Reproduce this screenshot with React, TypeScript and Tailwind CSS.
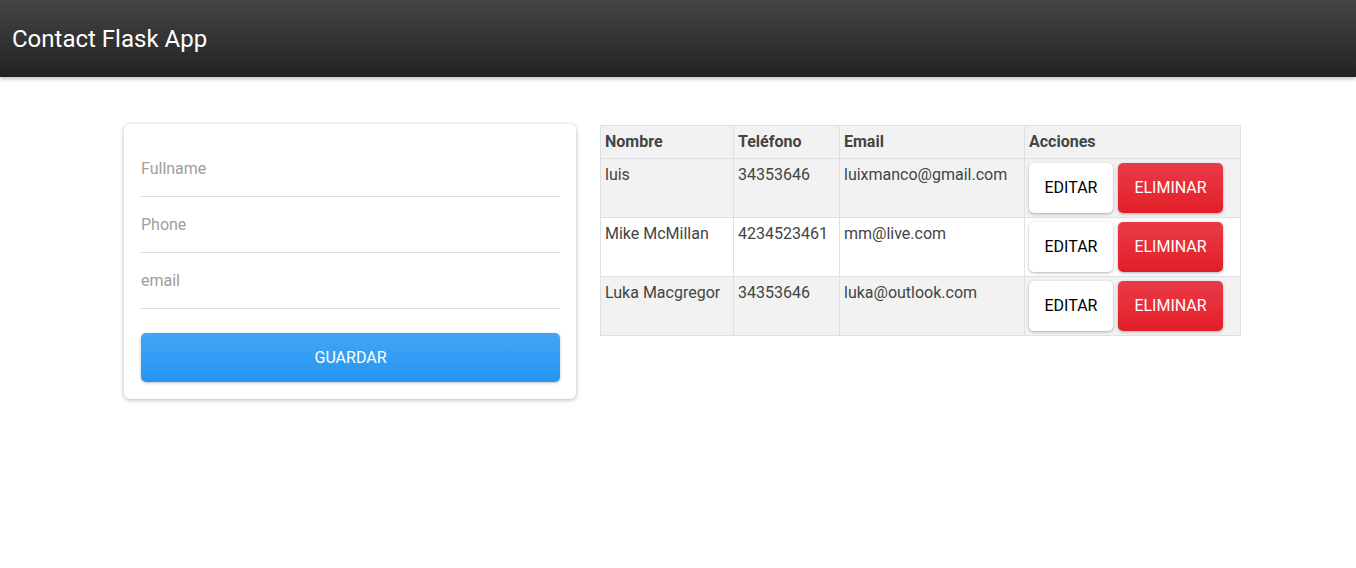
const contacts = [
  { name: "luis", phone: "34353646", email: "luixmanco@gmail.com" },
  { name: "Mike McMillan", phone: "4234523461", email: "mm@live.com" },
  { name: "Luka Macgregor", phone: "34353646", email: "luka@outlook.com" },
];

export default function App() {
  return (
    <div className="min-h-[568px] bg-white font-['Roboto',sans-serif] text-[#444]">
      {/* Navbar */}
      <header className="h-[77px] flex items-center px-3 bg-gradient-to-b from-[#454545] to-[#222] shadow-[0_2px_4px_rgba(0,0,0,0.25)]">
        <h1 className="text-[24px] text-white leading-none">Contact Flask App</h1>
      </header>

      <main className="flex items-start gap-6 pl-[124px] pt-[47px]">
        {/* Form */}
        <form className="w-[452px] bg-white rounded-[6px] shadow-[0_1px_4px_rgba(0,0,0,0.3)] pl-[17px] pr-4 pt-[17px] pb-[17px]">
          <input
            placeholder="Fullname"
            className="block w-full h-14 border-b border-[#ddd] outline-none text-base placeholder:text-[#9e9e9e]"
          />
          <input
            placeholder="Phone"
            className="block w-full h-14 border-b border-[#ddd] outline-none text-base placeholder:text-[#9e9e9e]"
          />
          <input
            placeholder="email"
            className="block w-full h-14 border-b border-[#ddd] outline-none text-base placeholder:text-[#9e9e9e]"
          />
          <button
            type="button"
            className="mt-6 w-full h-[49px] rounded-[5px] text-white text-base bg-gradient-to-b from-[#42a5f5] to-[#2196f3] shadow-[0_1px_3px_rgba(0,0,0,0.25)]"
          >
            GUARDAR
          </button>
        </form>

        {/* Table */}
        <table className="w-[641px] border-collapse text-base mt-px">
          <thead>
            <tr className="bg-[#f2f2f2]">
              <th className="w-[133px] border border-[#dfe0e4] px-[4px] py-[4px] text-left font-bold leading-6">Nombre</th>
              <th className="w-[106px] border border-[#dfe0e4] px-[4px] py-[4px] text-left font-bold leading-6">Teléfono</th>
              <th className="w-[185px] border border-[#dfe0e4] px-[4px] py-[4px] text-left font-bold leading-6">Email</th>
              <th className="border border-[#dfe0e4] px-[4px] py-[4px] text-left font-bold leading-6">Acciones</th>
            </tr>
          </thead>
          <tbody>
            {contacts.map((c, i) => (
              <tr key={i} className={i % 2 === 1 ? "bg-white" : "bg-[#f2f2f2]"}>
                <td className="border border-[#dfe0e4] p-[4px] align-top leading-6">{c.name}</td>
                <td className="border border-[#dfe0e4] p-[4px] align-top leading-6">{c.phone}</td>
                <td className="border border-[#dfe0e4] p-[4px] align-top leading-6">{c.email}</td>
                <td className="border border-[#dfe0e4] p-[4px] align-top">
                  <div className="flex gap-[5px]">
                    <button className="h-[50px] w-[84px] rounded-[5px] bg-white text-black shadow-[0_1px_3px_rgba(0,0,0,0.3)]">
                      EDITAR
                    </button>
                    <button className="h-[50px] w-[105px] rounded-[5px] text-white bg-gradient-to-b from-[#ea3a47] to-[#e21d26] shadow-[0_1px_3px_rgba(0,0,0,0.3)]">
                      ELIMINAR
                    </button>
                  </div>
                </td>
              </tr>
            ))}
          </tbody>
        </table>
      </main>
    </div>
  );
}
